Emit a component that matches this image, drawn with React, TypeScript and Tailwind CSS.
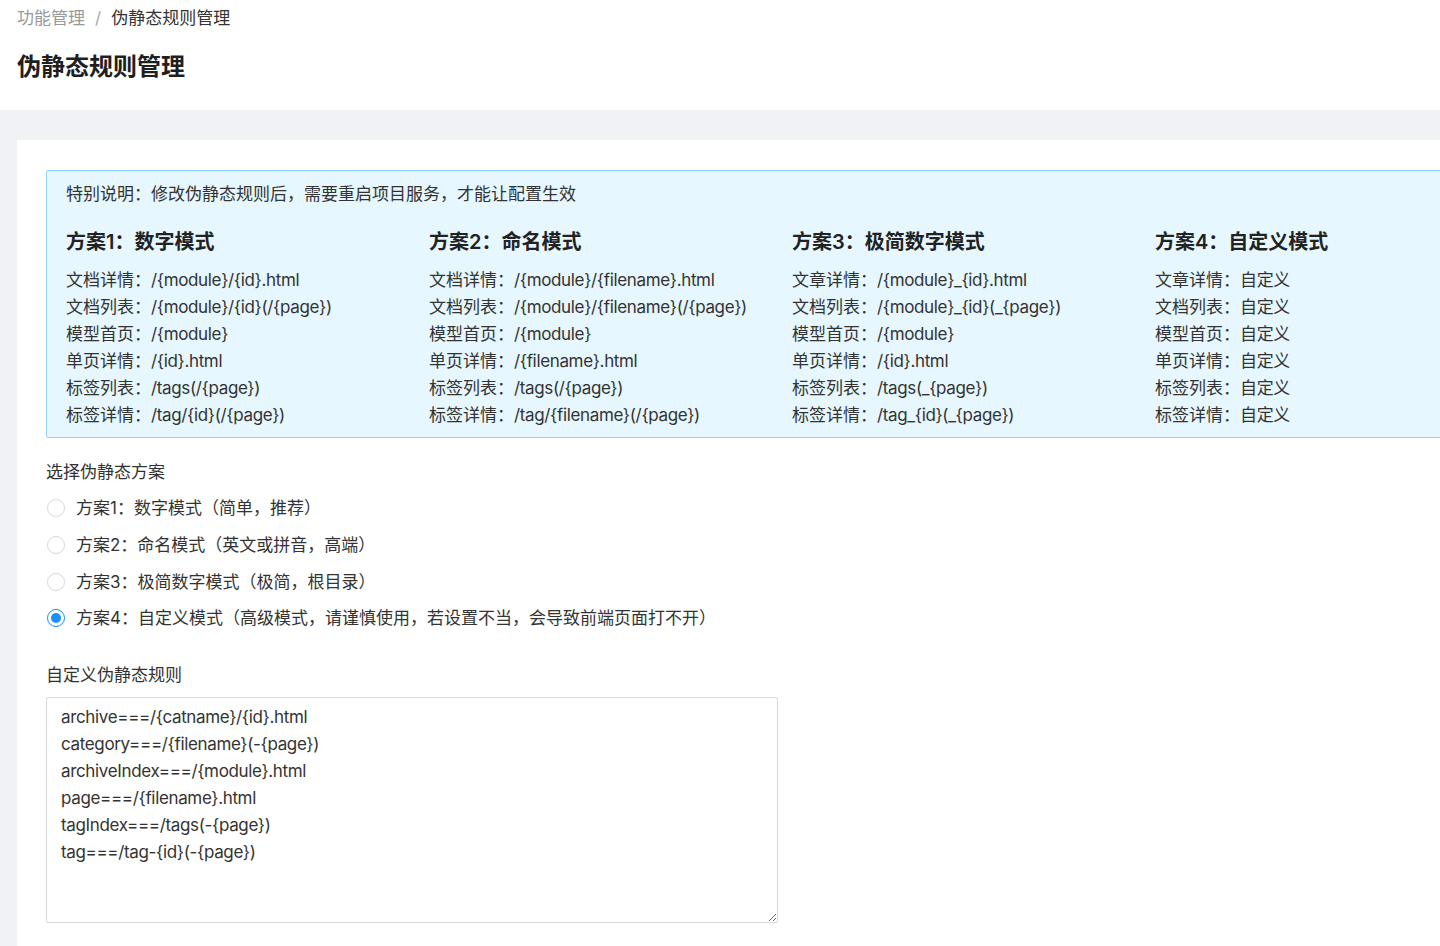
import { useState } from 'react'

const schemes = [
  {
    title: '方案1：数字模式',
    rows: [
      ['文档详情', '/{module}/{id}.html'],
      ['文档列表', '/{module}/{id}(/{page})'],
      ['模型首页', '/{module}'],
      ['单页详情', '/{id}.html'],
      ['标签列表', '/tags(/{page})'],
      ['标签详情', '/tag/{id}(/{page})'],
    ],
  },
  {
    title: '方案2：命名模式',
    rows: [
      ['文档详情', '/{module}/{filename}.html'],
      ['文档列表', '/{module}/{filename}(/{page})'],
      ['模型首页', '/{module}'],
      ['单页详情', '/{filename}.html'],
      ['标签列表', '/tags(/{page})'],
      ['标签详情', '/tag/{filename}(/{page})'],
    ],
  },
  {
    title: '方案3：极简数字模式',
    rows: [
      ['文章详情', '/{module}_{id}.html'],
      ['文档列表', '/{module}_{id}(_{page})'],
      ['模型首页', '/{module}'],
      ['单页详情', '/{id}.html'],
      ['标签列表', '/tags(_{page})'],
      ['标签详情', '/tag_{id}(_{page})'],
    ],
  },
  {
    title: '方案4：自定义模式',
    rows: [
      ['文章详情', '自定义'],
      ['文档列表', '自定义'],
      ['模型首页', '自定义'],
      ['单页详情', '自定义'],
      ['标签列表', '自定义'],
      ['标签详情', '自定义'],
    ],
  },
]

const options = [
  '方案1：数字模式（简单，推荐）',
  '方案2：命名模式（英文或拼音，高端）',
  '方案3：极简数字模式（极简，根目录）',
  '方案4：自定义模式（高级模式，请谨慎使用，若设置不当，会导致前端页面打不开）',
]

const defaultRules = `archive===/{catname}/{id}.html
category===/{filename}(-{page})
archiveIndex===/{module}.html
page===/{filename}.html
tagIndex===/tags(-{page})
tag===/tag-{id}(-{page})`

export default function App() {
  const [mode, setMode] = useState(3)

  return (
    <div
      className="w-[1440px] h-[946px] overflow-hidden bg-[#f0f2f5] text-[#333]"
      style={{ fontFamily: 'Inter, "Noto Sans CJK SC", sans-serif' }}
    >
      {/* header */}
      <div className="bg-white px-[17px] pt-[6px] pb-[27px]">
        <div className="flex items-center text-[17px] leading-[24px]">
          <span className="text-[#999]">功能管理</span>
          <span className="mx-[10px] text-[#aaa]">/</span>
          <span className="text-[#333]">伪静态规则管理</span>
        </div>
        <h1 className="mt-[21px] text-[24px] leading-[32px] font-semibold text-[#1f1f1f]">伪静态规则管理</h1>
      </div>

      {/* card */}
      <div className="ml-[17px] mt-[30px] w-[1560px] bg-white px-[29px] pt-[30px] pb-[40px]">
        <div className="w-[1500px] border border-[#91d5ff] bg-[#e6f7ff] pl-[19px] pt-[11px] pb-[8px] rounded-[2px]">
          <p className="text-[17px] leading-[24px]">特别说明：修改伪静态规则后，需要重启项目服务，才能让配置生效</p>
          <div className="mt-[22px] grid grid-cols-[363px_363px_363px_363px]">
            {schemes.map((s) => (
              <div key={s.title}>
                <h3 className="text-[20px] leading-[28px] font-semibold text-[#222]">{s.title}</h3>
                <div className="mt-[11px] text-[17px] leading-[27px]">
                  {s.rows.map(([k, v]) => (
                    <div key={k} className="whitespace-nowrap">
                      {k}：<span className="tracking-[-0.35px]">{v}</span>
                    </div>
                  ))}
                </div>
              </div>
            ))}
          </div>
        </div>

        <div className="mt-[22px] text-[17px] leading-[24px]">选择伪静态方案</div>
        <div className="mt-[6px] flex flex-col">
          {options.map((o, i) => (
            <label key={o} className="flex h-[36.7px] cursor-pointer items-center" onClick={() => setMode(i)}>
              <span
                className={
                  mode === i
                    ? 'ml-px flex h-[18px] w-[18px] items-center justify-center rounded-full border border-[#1890ff] bg-white'
                    : 'ml-px flex h-[18px] w-[18px] items-center justify-center rounded-full border border-[#d9d9d9] bg-white'
                }
              >
                {mode === i && <span className="h-[10px] w-[10px] rounded-full bg-[#1890ff]" />}
              </span>
              <span className="ml-[11px] text-[17px] leading-[24px]">{o}</span>
            </label>
          ))}
        </div>

        <div className="mt-[26px] text-[17px] leading-[24px]">自定义伪静态规则</div>
        <textarea
          className="mt-[10px] block h-[226px] w-[732px] rounded-[2px] border border-[#d9d9d9] px-[14px] pt-[6px] text-[17px] leading-[27px] tracking-[-0.35px] text-[#333] outline-none"
          defaultValue={defaultRules}
        />
      </div>
    </div>
  )
}
